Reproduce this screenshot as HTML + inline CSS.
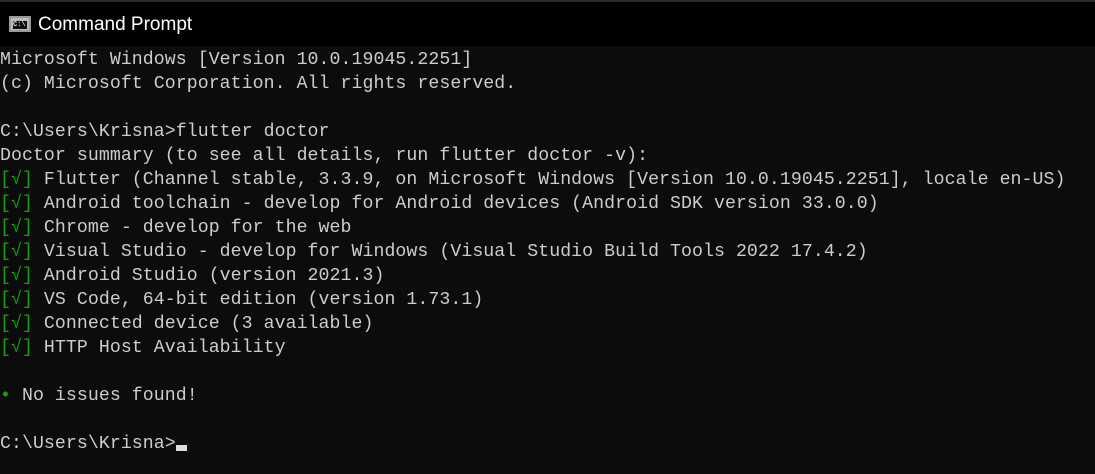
<!DOCTYPE html>
<html><head><meta charset="utf-8"><style>
html,body{margin:0;padding:0;width:1095px;height:474px;overflow:hidden;background:#0c0c0c;}
.tb{position:absolute;left:0;top:0;width:1095px;height:46px;background:#000;border-top:2px solid #2b2b2b;box-sizing:border-box;}
.tb .t{position:absolute;left:38px;top:12px;color:#fff;font:19px "Liberation Sans",sans-serif;}
.ic{position:absolute;left:9px;top:14px;width:22px;height:16px;background:#bbb;box-sizing:border-box;border:2px solid #9a9a9a;}
.ic i{position:absolute;left:2px;top:3px;width:14px;height:8px;background:#111;color:#ddd;font:bold 7px "Liberation Mono",monospace;font-style:normal;line-height:8px;}
pre{position:absolute;left:0;top:48px;margin:0;color:#cccccc;font:18.2px/24px "Liberation Mono",monospace;letter-spacing:0.07px;}
.g{color:#13a10e}
.cur{display:inline-block;width:11px;height:6px;background:#ddd;vertical-align:-3px;}
</style></head><body>
<div class="tb"><div class="ic"><i>C:\</i></div><div class="t">Command Prompt</div></div>
<pre>Microsoft Windows [Version 10.0.19045.2251]
(c) Microsoft Corporation. All rights reserved.

C:\Users\Krisna&gt;flutter doctor
Doctor summary (to see all details, run flutter doctor -v):
<span class="g">[√]</span> Flutter (Channel stable, 3.3.9, on Microsoft Windows [Version 10.0.19045.2251], locale en-US)
<span class="g">[√]</span> Android toolchain - develop for Android devices (Android SDK version 33.0.0)
<span class="g">[√]</span> Chrome - develop for the web
<span class="g">[√]</span> Visual Studio - develop for Windows (Visual Studio Build Tools 2022 17.4.2)
<span class="g">[√]</span> Android Studio (version 2021.3)
<span class="g">[√]</span> VS Code, 64-bit edition (version 1.73.1)
<span class="g">[√]</span> Connected device (3 available)
<span class="g">[√]</span> HTTP Host Availability

<span class="g">•</span> No issues found!

C:\Users\Krisna&gt;<span class="cur"></span></pre>
</body></html>
